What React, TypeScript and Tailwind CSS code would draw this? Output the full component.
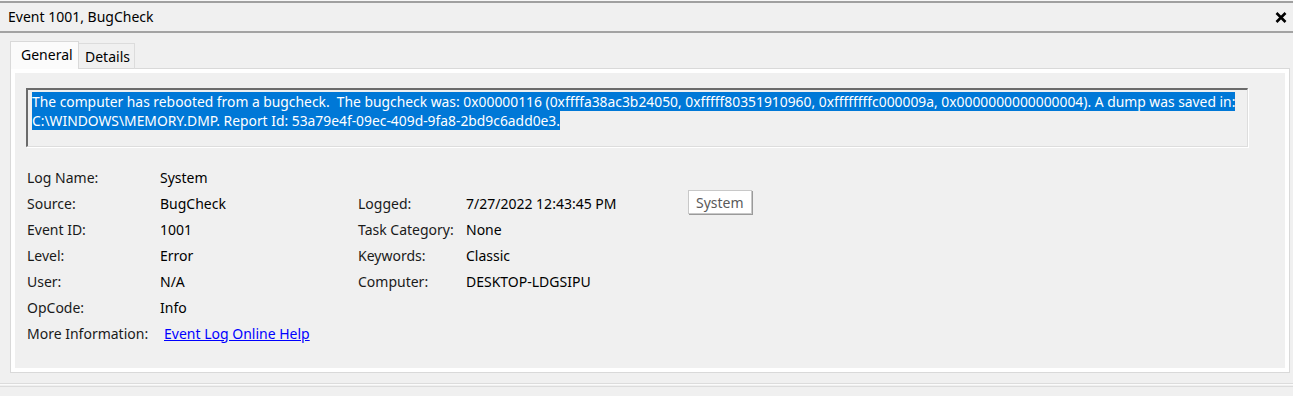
import React from "react";

const font = { fontFamily: '"Segoe UI", "Noto Sans", "Open Sans", sans-serif' };

function CloseX() {
  return (
    <svg width="12" height="11" viewBox="0 0 12 11" className="block">
      <path d="M1.5 1 L10.5 10 M10.5 1 L1.5 10" stroke="#000" strokeWidth="2.6" strokeLinecap="butt" />
    </svg>
  );
}

export default function App() {
  const rows: Array<[string, React.ReactNode, string?, React.ReactNode?]> = [
    ["Log Name:", "System"],
    ["Source:", "BugCheck", "Logged:", "7/27/2022 12:43:45 PM"],
    ["Event ID:", "1001", "Task Category:", "None"],
    ["Level:", "Error", "Keywords:", "Classic"],
    ["User:", "N/A", "Computer:", "DESKTOP-LDGSIPU"],
    ["OpCode:", "Info"],
  ];
  return (
    <div
      className="w-[1293px] h-[396px] bg-[#f0f0f0] text-[#000] text-[14px] overflow-hidden flex flex-col"
      style={font}
    >
      <div className="h-px bg-[#f7f7f7]" />
      <div className="h-[2px] bg-[#a0a0a0]" />
      <div className="h-[28px] flex items-center justify-between pl-[8px] pr-[6px]">
        <span className="leading-none">Event 1001, BugCheck</span>
        <CloseX />
      </div>
      <div className="h-[2px] bg-[#a3a3a3]" />

      <div className="pl-[10px] pr-[3px] pt-[8px]">
        <div className="flex items-end h-[28px] relative z-10 -mb-px">
          <div className="w-[69px] h-[28px] bg-[#fbfbfb] border border-[#d9d9d9] border-b-0 pl-[10px] pt-[3px] leading-[20px]">
            General
          </div>
          <div className="w-[56px] h-[26px] border border-[#dcdcdc] border-l-0 border-b-0 pl-[6px] pt-[3px] leading-[20px]">
            Details
          </div>
        </div>
        <div className="h-[305px] border border-[#d9d9d9] bg-white p-[4px]">
          <div className="h-full bg-[#f0f0f0] pt-[15px] pl-[11px] pr-[37px]">
            <div className="h-[59px] border-t-2 border-l-2 border-t-[#6b6b6b] border-l-[#6b6b6b] border-r border-b border-r-[#dddddd] border-b-[#dddddd] shadow-[1px_1px_0_#ffffff] pl-[4px] pt-[2px] text-white text-[13.85px]">
              <div className="leading-[19px] whitespace-nowrap">
                <span className="bg-[#0078d7] inline-block h-[19px]">
                  The computer has rebooted from a bugcheck.&nbsp; The bugcheck was: 0x00000116 (0xffffa38ac3b24050, 0xfffff80351910960, 0xffffffffc000009a, 0x0000000000000004). A dump was saved in:
                </span>
              </div>
              <div className="leading-[19px] whitespace-nowrap">
                <span className="bg-[#0078d7] inline-block h-[19px]">
                  C:\WINDOWS\MEMORY.DMP. Report Id: 53a79e4f-09ec-409d-9fa8-2bd9c6add0e3.
                </span>
              </div>
            </div>

            <div className="mt-[17px] pl-[1px] grid grid-cols-[133px_198px_108px_222px_1fr] auto-rows-[26px] items-center">
              {rows.map((r, i) => (
                <React.Fragment key={i}>
                  <div className="text-[#1a1a1a]">{r[0]}</div>
                  <div>{r[1]}</div>
                  <div className="text-[#1a1a1a]">{r[2] ?? ""}</div>
                  <div>{r[3] ?? ""}</div>
                  <div>
                    {i === 1 ? (
                      <div className="inline-flex items-center h-[24px] px-[7px] bg-white border border-[#c8c8c8] shadow-[1px_1px_0_#9a9a9a] text-[#5a5a5a] -mt-[5px]">
                        System
                      </div>
                    ) : null}
                  </div>
                </React.Fragment>
              ))}
              <div className="text-[#1a1a1a]">More Information:</div>
              <div className="pl-[4px]">
                <a href="#" className="text-[#0000ff] underline">Event Log Online Help</a>
              </div>
            </div>
          </div>
        </div>
      </div>
      <div className="mt-[10px] h-px bg-[#dcdcdc]" />
      <div className="h-px bg-[#fbfbfb]" />
      <div className="h-px bg-[#f0f0f0]" />
      <div className="h-px bg-[#dcdcdc]" />
    </div>
  );
}
